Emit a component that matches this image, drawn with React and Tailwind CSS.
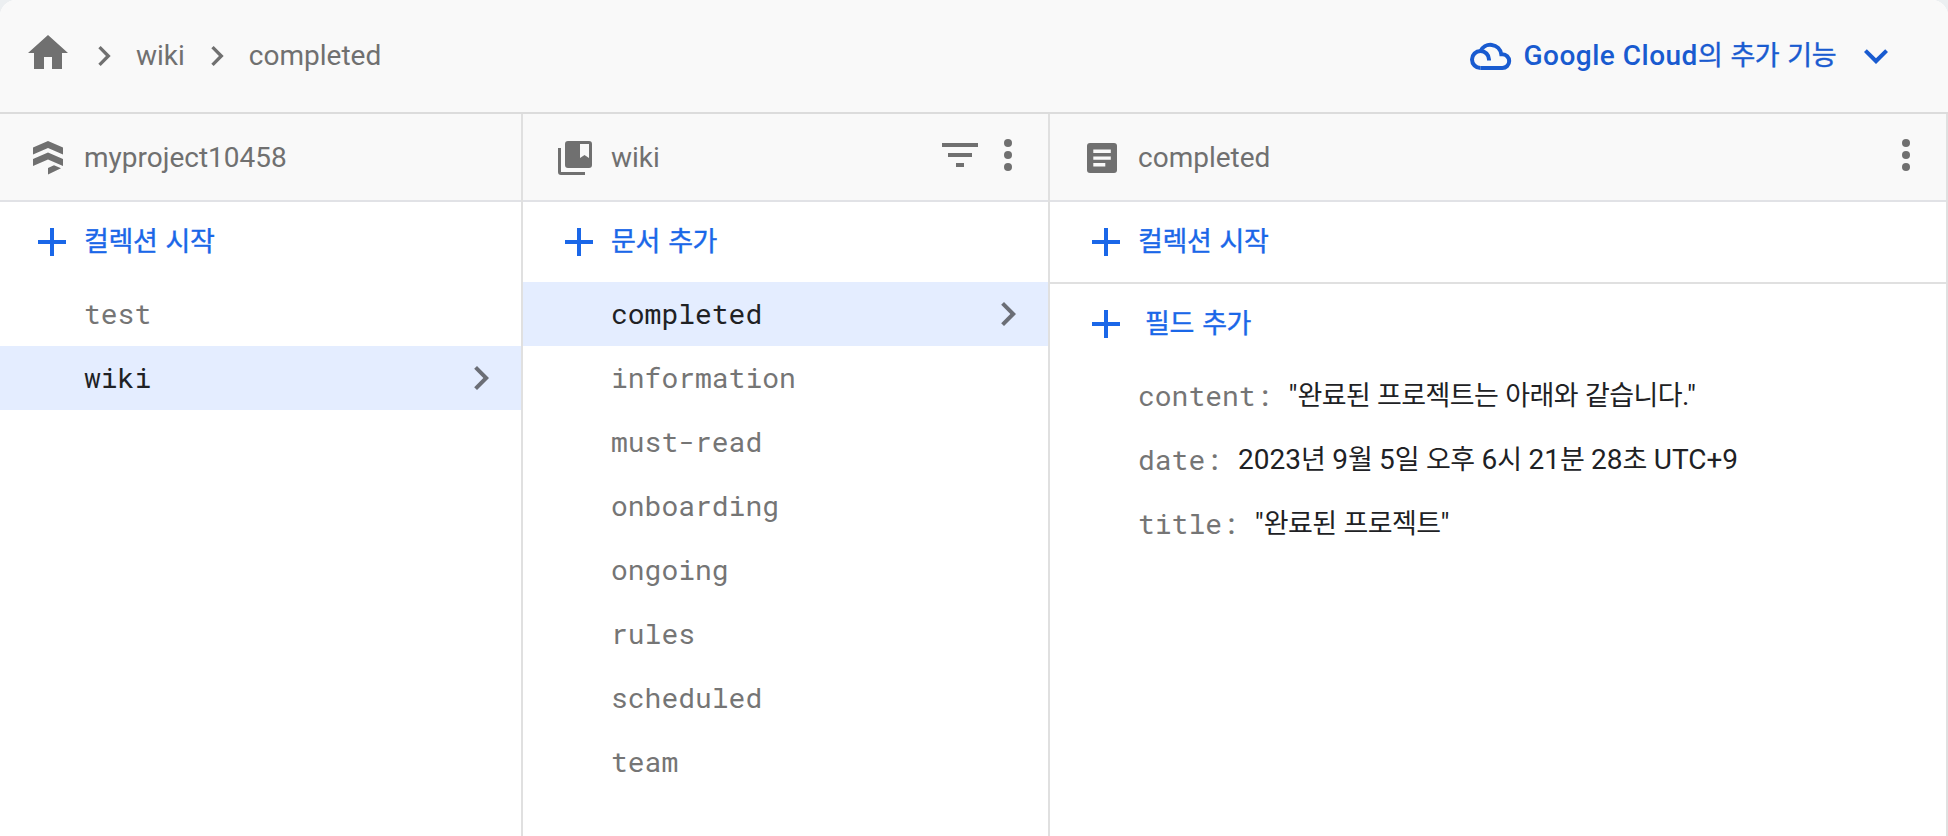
const SANS = "font-[Roboto,'Noto_Sans_CJK_KR',sans-serif]";
const MONO = "font-['Roboto_Mono','DejaVu_Sans_Mono',monospace] text-[28px]";

function Home() {
  return (
    <svg className="size-12 shrink-0" viewBox="0 0 24 24" fill="currentColor">
      <path d="M10 20v-6h4v6h5v-8h3L12 3 2 12h3v8z" />
    </svg>
  );
}

function ChevronRight({ className }) {
  return (
    <svg className={className} viewBox="0 0 24 24" fill="currentColor">
      <path d="M10 6 8.59 7.41 13.17 12l-4.58 4.59L10 18l6-6z" />
    </svg>
  );
}

function ChevronDown({ className }) {
  return (
    <svg className={className} viewBox="0 0 24 24" fill="currentColor">
      <path d="M16.59 8.59 12 13.17 7.41 8.59 6 10l6 6 6-6z" />
    </svg>
  );
}

function Cloud() {
  return (
    <svg className="h-7 w-[42px] shrink-0" viewBox="0 0 42 28" fill="none" stroke="currentColor" strokeWidth="4">
      <path d="M10.500 26A8.500 8.500 0 1 1 19 17.500V18.500" />
      <path d="M10.300 9.500A11 11 0 0 1 31.300 12.200H32.300A6.900 6.900 0 0 1 32.300 26H10.500" />
    </svg>
  );
}

function Firestore() {
  return (
    <svg className="h-[34px] w-[30px] shrink-0" viewBox="0 0 30 34" fill="currentColor">
      <path d="M0 6.500 15 0l15 6.500v7L15 7 0 13.500zM0 18l15-6.500L30 18v7l-15-6.500L0 25zM15 27l6-2.700 7 3L15 33.500z" />
    </svg>
  );
}

function Collection() {
  return (
    <svg className="h-[34px] w-[34px] shrink-0" viewBox="0 0 34 34" fill="currentColor">
      <path d="M0 7h3v24h24v3H3a3 3 0 0 1-3-3z" />
      <path fillRule="evenodd" d="M10 0h21a3 3 0 0 1 3 3v21a3 3 0 0 1-3 3H10a3 3 0 0 1-3-3V3a3 3 0 0 1 3-3zM22 3v14l4.500-3 4.500 3V3z" />
    </svg>
  );
}

function Document() {
  return (
    <svg className="size-[30px] shrink-0" viewBox="0 0 30 30">
      <rect width="30" height="30" rx="3" fill="currentColor" />
      <path d="M6.300 6.500h17.500v3.500H6.300zM6.300 13.400h17.500v3.300H6.300zM6.300 20h12v3.500h-12z" fill="#f9f9f9" />
    </svg>
  );
}

function Filter() {
  return (
    <svg className="h-6 w-9 shrink-0" viewBox="0 0 36 24" fill="currentColor">
      <path d="M0 0h36v4H0zM6 10h24v4H6zM14 20h8v4h-8z" />
    </svg>
  );
}

function More() {
  return (
    <svg className="h-8 w-2 shrink-0" viewBox="0 0 8 32" fill="currentColor">
      <circle cx="4" cy="4" r="4" />
      <circle cx="4" cy="16" r="4" />
      <circle cx="4" cy="28" r="4" />
    </svg>
  );
}

function Plus() {
  return (
    <svg className="size-7 shrink-0" viewBox="0 0 28 28" fill="currentColor">
      <path d="M12 0h4v12h12v4H16v12h-4V16H0v-4h12z" />
    </svg>
  );
}

function Column({ className, icon, title, actions, children }) {
  return (
    <section className={`flex flex-col border-r-2 border-[#e0e0e0] ${className}`}>
      <header className="flex h-[88px] shrink-0 items-center border-b-2 border-[#e1e2e6] bg-[#f9f9f9] pt-0.5 text-[#707070]">
        <span className="flex w-[52px] shrink-0">{icon}</span>
        <h2 className="flex-1 text-[28px]">{title}</h2>
        <div className="mb-1.5 flex items-center gap-[26px]">{actions}</div>
      </header>
      {children}
    </section>
  );
}

function AddButton({ className, children }) {
  return (
    <button className={`flex shrink-0 items-center text-[27px] tracking-[-0.4px] text-[#1a67e8] [word-spacing:2px] ${className}`}>
      <Plus />
      <span className="mt-px [-webkit-text-stroke:0.4px]">{children}</span>
    </button>
  );
}

function Item({ active, name, className }) {
  return (
    <li className={`flex h-16 items-center justify-between ${MONO} ${active ? "bg-[#e4edff] text-[#202124]" : "text-[#757575]"} ${className}`}>
      {name}
      {active && <ChevronRight className="size-12 text-[#6b6e76]" />}
    </li>
  );
}

// Hangul runs are set a little smaller and tighter than the Latin text around them.
function Mixed({ text }) {
  return text.split(/([가-힣]+)/).map((run, i) =>
    i % 2 ? <span key={i} className="text-[27px] tracking-[-0.6px]">{run}</span> : run
  );
}

function Field({ name, value }) {
  return (
    <div className="flex h-16 items-center">
      <dt className={`${MONO} text-[#757575]`}>{name}:</dt>
      <dd className="-mt-px ml-4 text-[28px] whitespace-pre text-[#202124]"><Mixed text={value} /></dd>
    </div>
  );
}

const documents = ["completed", "information", "must-read", "onboarding", "ongoing", "rules", "scheduled", "team"];

export default function App() {
  return (
    <div className="h-[836px] w-[1948px] overflow-hidden bg-[#eceff1]">
      <div className={`flex h-full flex-col overflow-hidden rounded-t-2xl bg-white ${SANS}`}>
        <nav className="flex h-[114px] shrink-0 items-center border-b-2 border-[#dcdcdc] bg-[#f9f9f9] pr-[48px] pl-6 text-[28px] text-[#707070]">
          <span className="mb-[6px]"><Home /></span>
          <ChevronRight className="ml-3 size-10" />
          <span className="ml-3">wiki</span>
          <ChevronRight className="ml-3 size-10" />
          <span className="ml-3">completed</span>
          <button className="ml-auto flex items-center text-[#195bd0]">
            <Cloud />
            <span className="ml-[11px] font-medium tracking-[0.5px]">Google Cloud</span>
            <span className="text-[27px] tracking-[-0.5px] [-webkit-text-stroke:0.4px] [word-spacing:2px]">의 추가 기능</span>
            <ChevronDown className="ml-4 size-12" />
          </button>
        </nav>
        <main className="flex flex-1">
          <Column className="w-[523px]" icon={<span className="ml-[33px]"><Firestore /></span>} title={<span className="ml-8">myproject10458</span>}>
            <AddButton className="h-20 gap-[18px] pl-[38px]">컬렉션 시작</AddButton>
            <ul>
              <Item name="test" className="pr-4 pl-[84px]" />
              <Item name="wiki" active className="pr-4 pl-[84px]" />
            </ul>
          </Column>
          <Column
            className="w-[527px]"
            icon={<span className="ml-[35px]"><Collection /></span>}
            title={<span className="ml-9">wiki</span>}
            actions={<><Filter /><span className="mr-[36px]"><More /></span></>}
          >
            <AddButton className="h-20 gap-[18px] pl-[42px]">문서 추가</AddButton>
            <ul>
              {documents.map((name, i) => (
                <Item key={name} name={name} active={i === 0} className="pr-4 pl-[88px]" />
              ))}
            </ul>
          </Column>
          <Column
            className="flex-1"
            icon={<span className="ml-[37px]"><Document /></span>}
            title={<span className="ml-9">completed</span>}
            actions={<span className="mr-[36px]"><More /></span>}
          >
            <AddButton className="h-[82px] gap-[18px] border-b-2 border-[#e0e0e0] pl-[42px]">컬렉션 시작</AddButton>
            <AddButton className="h-20 gap-[25px] pl-[42px]">필드 추가</AddButton>
            <dl className="pl-[88px]">
              <Field name="content" value={'"완료된 프로젝트는 아래와 같습니다."'} />
              <Field name="date" value="2023년 9월 5일 오후 6시 21분 28초 UTC+9" />
              <Field name="title" value={'"완료된 프로젝트"'} />
            </dl>
          </Column>
        </main>
      </div>
    </div>
  );
}
